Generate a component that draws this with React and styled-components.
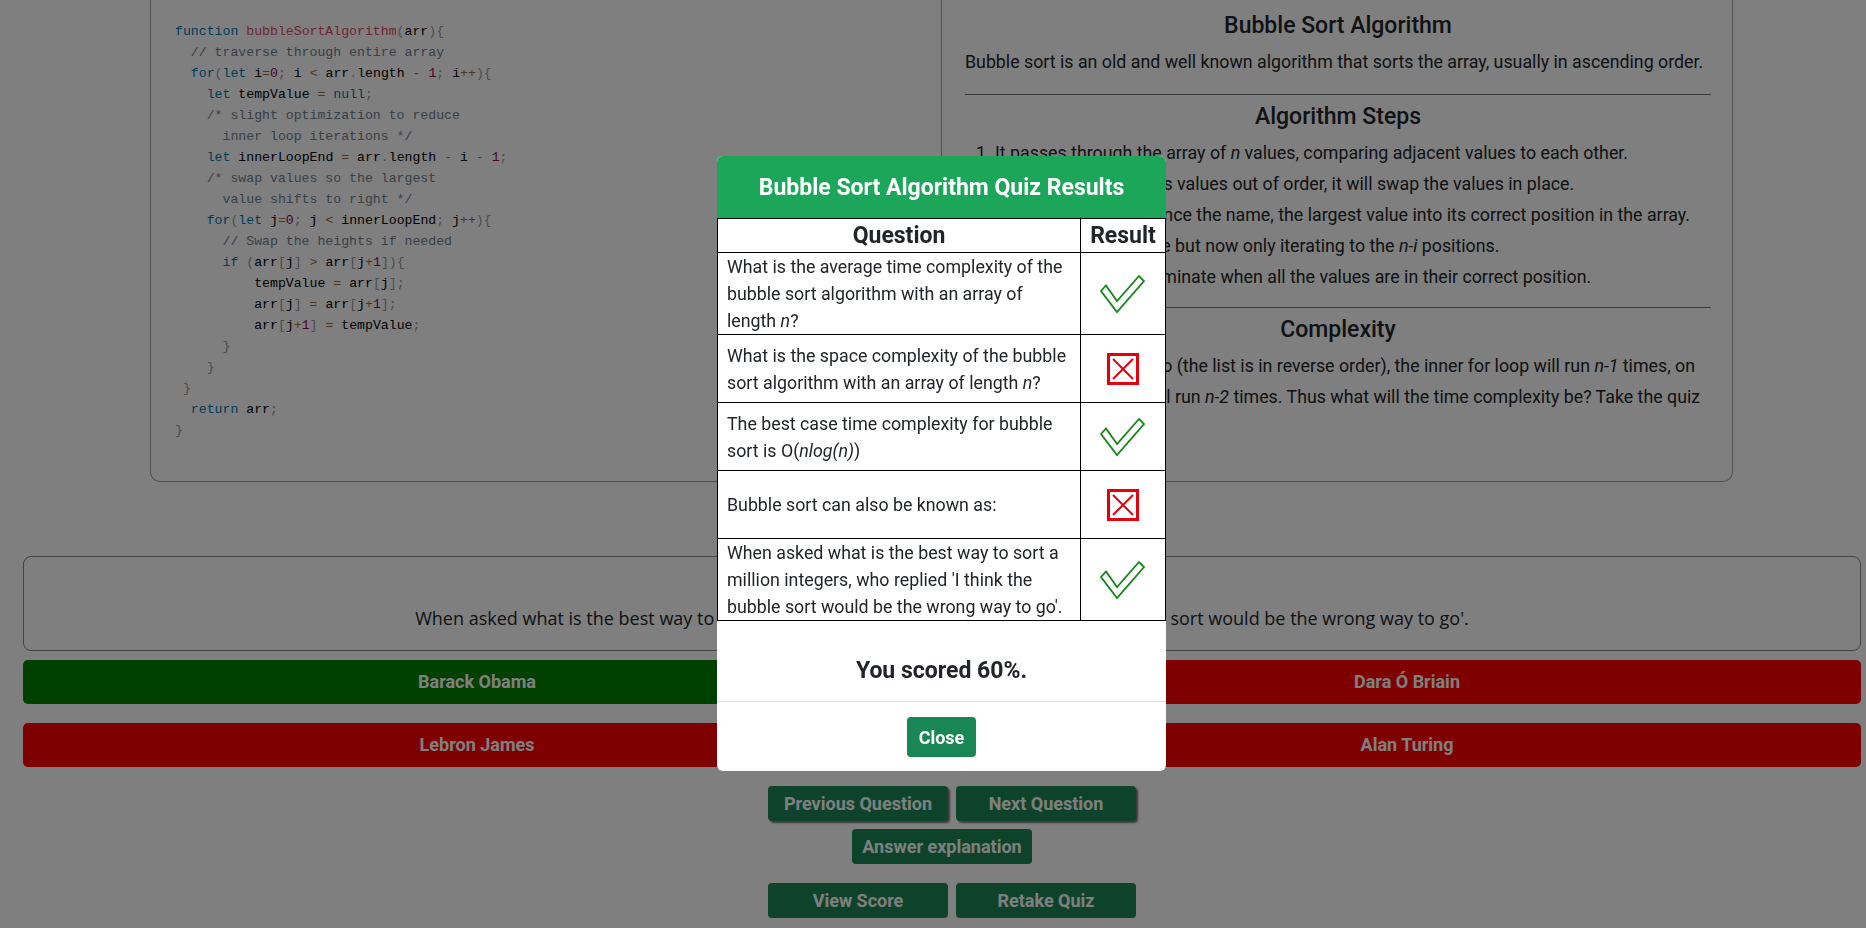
import React from 'react';
import styled, { createGlobalStyle } from 'styled-components';

const GlobalStyle = createGlobalStyle`
  html, body {
    margin: 0;
    padding: 0;
    background: #fff;
  }
  body {
    font-family: Roboto, "Liberation Sans", sans-serif;
    color: #212529;
    overflow: hidden;
  }
  * {
    box-sizing: border-box;
  }
`;

const Page = styled.div`
  padding: 0 5px 0 23px;
`;

const LessonCard = styled.section`
  margin: 0 128px 0 127px;
  display: grid;
  grid-template-columns: 791px minmax(0, 1fr);
  border: 1px solid #a0a0a0;
  border-top: none;
  border-radius: 0 0 10px 10px;
`;

const CodeColumn = styled.div`
  border-right: 1px solid #a0a0a0;
  padding: 21px 0 0 24px;
`;

const CodeBlock = styled.pre`
  margin: 0;
  font-family: "Liberation Mono", "DejaVu Sans Mono", monospace;
  font-size: 13.2px;
  line-height: 21px;
  color: #000;
`;

const TOKEN_COLORS = {
  keyword: '#0077aa',
  fn: '#dd4a68',
  comment: '#708090',
  punct: '#999999',
  number: '#990055',
  operator: '#9a6e3a',
  plain: '#000000'
};

const Tok = styled.span`
  color: ${props => TOKEN_COLORS[props.$kind]};
`;

const Explanation = styled.div`
  padding: 12px 21px 38px 23px;
  font-size: 17.8px;
`;

const Heading = styled.h4`
  margin: ${props => props.$first ? '0' : '8px 0 0'};
  font-size: 23px;
  font-weight: 500;
  line-height: 28.8px;
  text-align: center;
`;

const Lead = styled.p`
  margin: 8px 0 0;
  line-height: 25.5px;
`;

const Rule = styled.hr`
  margin: ${props => props.$top}px 0 0;
  border: 0;
  border-top: 1px solid #777;
  opacity: 1;
`;

const Steps = styled.ol`
  margin: 5px 0 0;
  padding-left: 30px;
  line-height: 31px;
`;

const Paragraph = styled.p`
  margin: 5px 0 0;
  line-height: 31px;
  white-space: nowrap;
`;

const QuestionBox = styled.div`
  margin-top: 74px;
  border: 1px solid #888;
  border-radius: 8px;
  padding: 48px 16px 19px;
  text-align: center;
  font-family: "Open Sans", Lato, sans-serif;
  font-size: 18px;
  line-height: 26px;
  color: #212529;
`;

const AnswerGrid = styled.div`
  margin-top: 9px;
  display: grid;
  grid-template-columns: 1fr 1fr;
  column-gap: 22px;
  row-gap: 19px;
`;

const AnswerButton = styled.button`
  height: 44px;
  border: none;
  border-radius: 5px;
  background: ${props => props.$correct ? '#008000' : '#ff0000'};
  color: #fff;
  font-family: Roboto, sans-serif;
  font-size: 18px;
  font-weight: 700;
`;

const Controls = styled.div`
  margin-top: 19px;
  display: flex;
  flex-direction: column;
`;

const ButtonRow = styled.div`
  display: flex;
  justify-content: center;
  gap: 8px;
  padding-left: ${props => props.$shift ? '20px' : '0'};
  margin-top: ${props => props.$gap || 0}px;
`;

const ControlButton = styled.button`
  width: 180px;
  height: 35px;
  border: none;
  border-radius: 4px;
  background: #198754;
  color: #fff;
  font-family: Roboto, sans-serif;
  font-size: 18px;
  font-weight: 700;
  box-shadow: ${props => props.$raised ? '2px 2px 2px rgba(0,0,0,0.55)' : 'none'};
`;

const Overlay = styled.div`
  position: fixed;
  inset: 0;
  background: rgba(0, 0, 0, 0.5);
  display: flex;
  justify-content: center;
  align-items: flex-start;
  padding: 156px 0 0 17px;
`;

const Modal = styled.div`
  width: 449px;
  background: #fff;
  border-radius: 6px;
  overflow: hidden;
`;

const ModalHeader = styled.div`
  height: 62px;
  background: #1ca65a;
  color: #fff;
  display: flex;
  align-items: center;
  justify-content: center;
  font-size: 23px;
  font-weight: 700;
`;

const ResultsTable = styled.table`
  width: 100%;
  border-collapse: collapse;
  font-size: 17.8px;
  line-height: 27px;
  color: #212529;
`;

const HeadCell = styled.th`
  border: 1px solid #000;
  height: 34px;
  padding: 0;
  font-size: 23px;
  line-height: 30px;
  font-weight: 700;
  text-align: center;
  width: ${props => props.$narrow ? '85px' : 'auto'};
`;

const QuestionCell = styled.td`
  border: 1px solid #000;
  padding: 0 6px 0 9px;
  vertical-align: middle;
`;

const IconCell = styled.td`
  border: 1px solid #000;
  height: 68px;
  padding: 0;
  text-align: center;
  vertical-align: middle;

  svg {
    display: block;
    margin: 0 auto;
  }
`;

const Score = styled.div`
  padding: 37px 0 18px;
  text-align: center;
  font-size: 23px;
  font-weight: 700;
  line-height: 25px;
`;

const ModalFooter = styled.div`
  border-top: 1px solid #dee2e6;
  padding: 15px 0 14px;
  display: flex;
  justify-content: center;
`;

const CloseButton = styled.button`
  height: 40px;
  padding: 0 12px;
  border: none;
  border-radius: 4px;
  background: #198754;
  color: #fff;
  font-family: Roboto, sans-serif;
  font-size: 18px;
  font-weight: 700;
`;

const CODE = [
  'function bubbleSortAlgorithm(arr){',
  '  // traverse through entire array',
  '  for(let i=0; i < arr.length - 1; i++){',
  '    let tempValue = null;',
  '    /* slight optimization to reduce',
  '      inner loop iterations */',
  '    let innerLoopEnd = arr.length - i - 1;',
  '    /* swap values so the largest',
  '      value shifts to right */',
  '    for(let j=0; j < innerLoopEnd; j++){',
  '      // Swap the heights if needed',
  '      if (arr[j] > arr[j+1]){',
  '          tempValue = arr[j];',
  '          arr[j] = arr[j+1];',
  '          arr[j+1] = tempValue;',
  '      }',
  '    }',
  ' }',
  '  return arr;',
  '}'
];

const KEYWORDS = ['function', 'for', 'let', 'null', 'if', 'return'];
const TOKEN = /(\/\/.*)|(\/\*)|([A-Za-z_]\w*)|(\d+)|(\+\+|[=<>+-])|([(){}[\];.,])|(\s+)/y;

// tiny prism-like highlighter, just enough for the snippet above
const highlight = lines => {
  let inComment = false;
  return lines.map(line => {
    const out = [];
    let pos = 0;
    let prev = '';
    while (pos < line.length) {
      if (inComment) {
        const lead = line.match(/^\s*/)[0];
        if (pos === 0 && lead) {
          out.push(['plain', lead]);
          pos = lead.length;
        }
        const end = line.indexOf('*/', pos);
        if (end === -1) {
          out.push(['comment', line.slice(pos)]);
          pos = line.length;
        } else {
          out.push(['comment', line.slice(pos, end + 2)]);
          pos = end + 2;
          inComment = false;
        }
        continue;
      }
      TOKEN.lastIndex = pos;
      const m = TOKEN.exec(line);
      if (!m) {
        out.push(['plain', line[pos]]);
        pos += 1;
        continue;
      }
      const [text, lineComment, blockStart, ident, num, op, punct] = m;
      if (lineComment) out.push(['comment', text]);
      else if (blockStart) {
        inComment = true;
        pos = m.index;
        continue;
      } else if (ident) {
        if (KEYWORDS.includes(ident)) out.push(['keyword', text]);
        else if (prev === 'function') out.push(['fn', text]);
        else out.push(['plain', text]);
        prev = ident;
      } else if (num) out.push(['number', text]);
      else if (op) out.push(['operator', text]);
      else if (punct) out.push(['punct', text]);
      else out.push(['plain', text]);
      pos = m.index + text.length;
    }
    return out;
  });
};

const CheckIcon = () => (
  <svg width="46" height="40" viewBox="-1 -1 46 40">
    <polygon points="0,16 5,10.5 16,26 38,1 43,6 16,37"
             fill="#fff"
             stroke="#17861a"
             strokeWidth="1.8"
             strokeLinejoin="miter" />
  </svg>
);

const CrossIcon = () => (
  <svg width="32" height="32" viewBox="0 0 32 32">
    <rect x="1.5" y="1.5" width="29" height="29" fill="#fff" stroke="#e3000f" strokeWidth="3" />
    <path d="M6 6 L26 26 M26 6 L6 26" stroke="#e3000f" strokeWidth="2" />
  </svg>
);

const RESULTS = [
  { id: 1, correct: true, text: <>What is the average time complexity of the bubble sort algorithm with an array of length <i>n</i>?</> },
  { id: 2, correct: false, text: <>What is the space complexity of the bubble sort algorithm with an array of length <i>n</i>?</> },
  { id: 3, correct: true, text: <>The best case time complexity for bubble sort is O(<i>nlog(n)</i>)</> },
  { id: 4, correct: false, text: <>Bubble sort can also be known as:</> },
  { id: 5, correct: true, text: <>When asked what is the best way to sort a million integers, who replied 'I think the bubble sort would be the wrong way to go'.</> }
];

const ANSWERS = [
  { label: 'Barack Obama', correct: true },
  { label: 'Dara Ó Briain', correct: false },
  { label: 'Lebron James', correct: false },
  { label: 'Alan Turing', correct: false }
];

const App = () => {
  const code = highlight(CODE);
  return (
    <>
      <GlobalStyle />
      <Page>
        <LessonCard>
          <CodeColumn>
            <CodeBlock>
              {code.map((tokens, i) => (
                <div key={i}>
                  {tokens.map(([kind, text], j) => (
                    <Tok key={j} $kind={kind}>{text}</Tok>
                  ))}
                  {tokens.length === 0 && ' '}
                </div>
              ))}
            </CodeBlock>
          </CodeColumn>
          <Explanation>
            <Heading $first>Bubble Sort Algorithm</Heading>
            <Lead>Bubble sort is an old and well known algorithm that sorts the array, usually in ascending order.</Lead>
            <Rule $top={20} />
            <Heading>Algorithm Steps</Heading>
            <Steps>
              <li>It passes through the array of <i>n</i> values, comparing adjacent values to each other.</li>
              <li>If the bubble sort finds values out of order, it will swap the values in place.</li>
              <li>It then bubbles up, hence the name, the largest value into its correct position in the array.</li>
              <li>Then repeat the above but now only iterating to the <i>n-i</i> positions.</li>
              <li>The algorithm will terminate when all the values are in their correct position.</li>
            </Steps>
            <Rule $top={15} />
            <Heading>Complexity</Heading>
            <Paragraph>
              In the worst case scenario (the list is in reverse order), the inner for loop will run <i>n-1</i> times, on
              <br />
              and the second loop it will run <i>n-2</i> times. Thus what will the time complexity be? Take the quiz
              <br />
              to find out!
            </Paragraph>
          </Explanation>
        </LessonCard>

        <QuestionBox>
          When asked what is the best way to sort a million integers, who replied 'I think the bubble sort would be the wrong way to go'.
        </QuestionBox>

        <AnswerGrid>
          {ANSWERS.map(answer => (
            <AnswerButton key={answer.label} $correct={answer.correct}>{answer.label}</AnswerButton>
          ))}
        </AnswerGrid>

        <Controls>
          <ButtonRow $shift>
            <ControlButton $raised>Previous Question</ControlButton>
            <ControlButton $raised>Next Question</ControlButton>
          </ButtonRow>
          <ButtonRow $gap={8}>
            <ControlButton>Answer explanation</ControlButton>
          </ButtonRow>
          <ButtonRow $shift $gap={19}>
            <ControlButton>View Score</ControlButton>
            <ControlButton>Retake Quiz</ControlButton>
          </ButtonRow>
        </Controls>
      </Page>

      <Overlay>
        <Modal>
          <ModalHeader>Bubble Sort Algorithm Quiz Results</ModalHeader>
          <ResultsTable>
            <thead>
              <tr>
                <HeadCell>Question</HeadCell>
                <HeadCell $narrow>Result</HeadCell>
              </tr>
            </thead>
            <tbody>
              {RESULTS.map(row => (
                <tr key={row.id}>
                  <QuestionCell>{row.text}</QuestionCell>
                  <IconCell>{row.correct ? <CheckIcon /> : <CrossIcon />}</IconCell>
                </tr>
              ))}
            </tbody>
          </ResultsTable>
          <Score>You scored 60%.</Score>
          <ModalFooter>
            <CloseButton>Close</CloseButton>
          </ModalFooter>
        </Modal>
      </Overlay>
    </>
  );
};

export default App;
